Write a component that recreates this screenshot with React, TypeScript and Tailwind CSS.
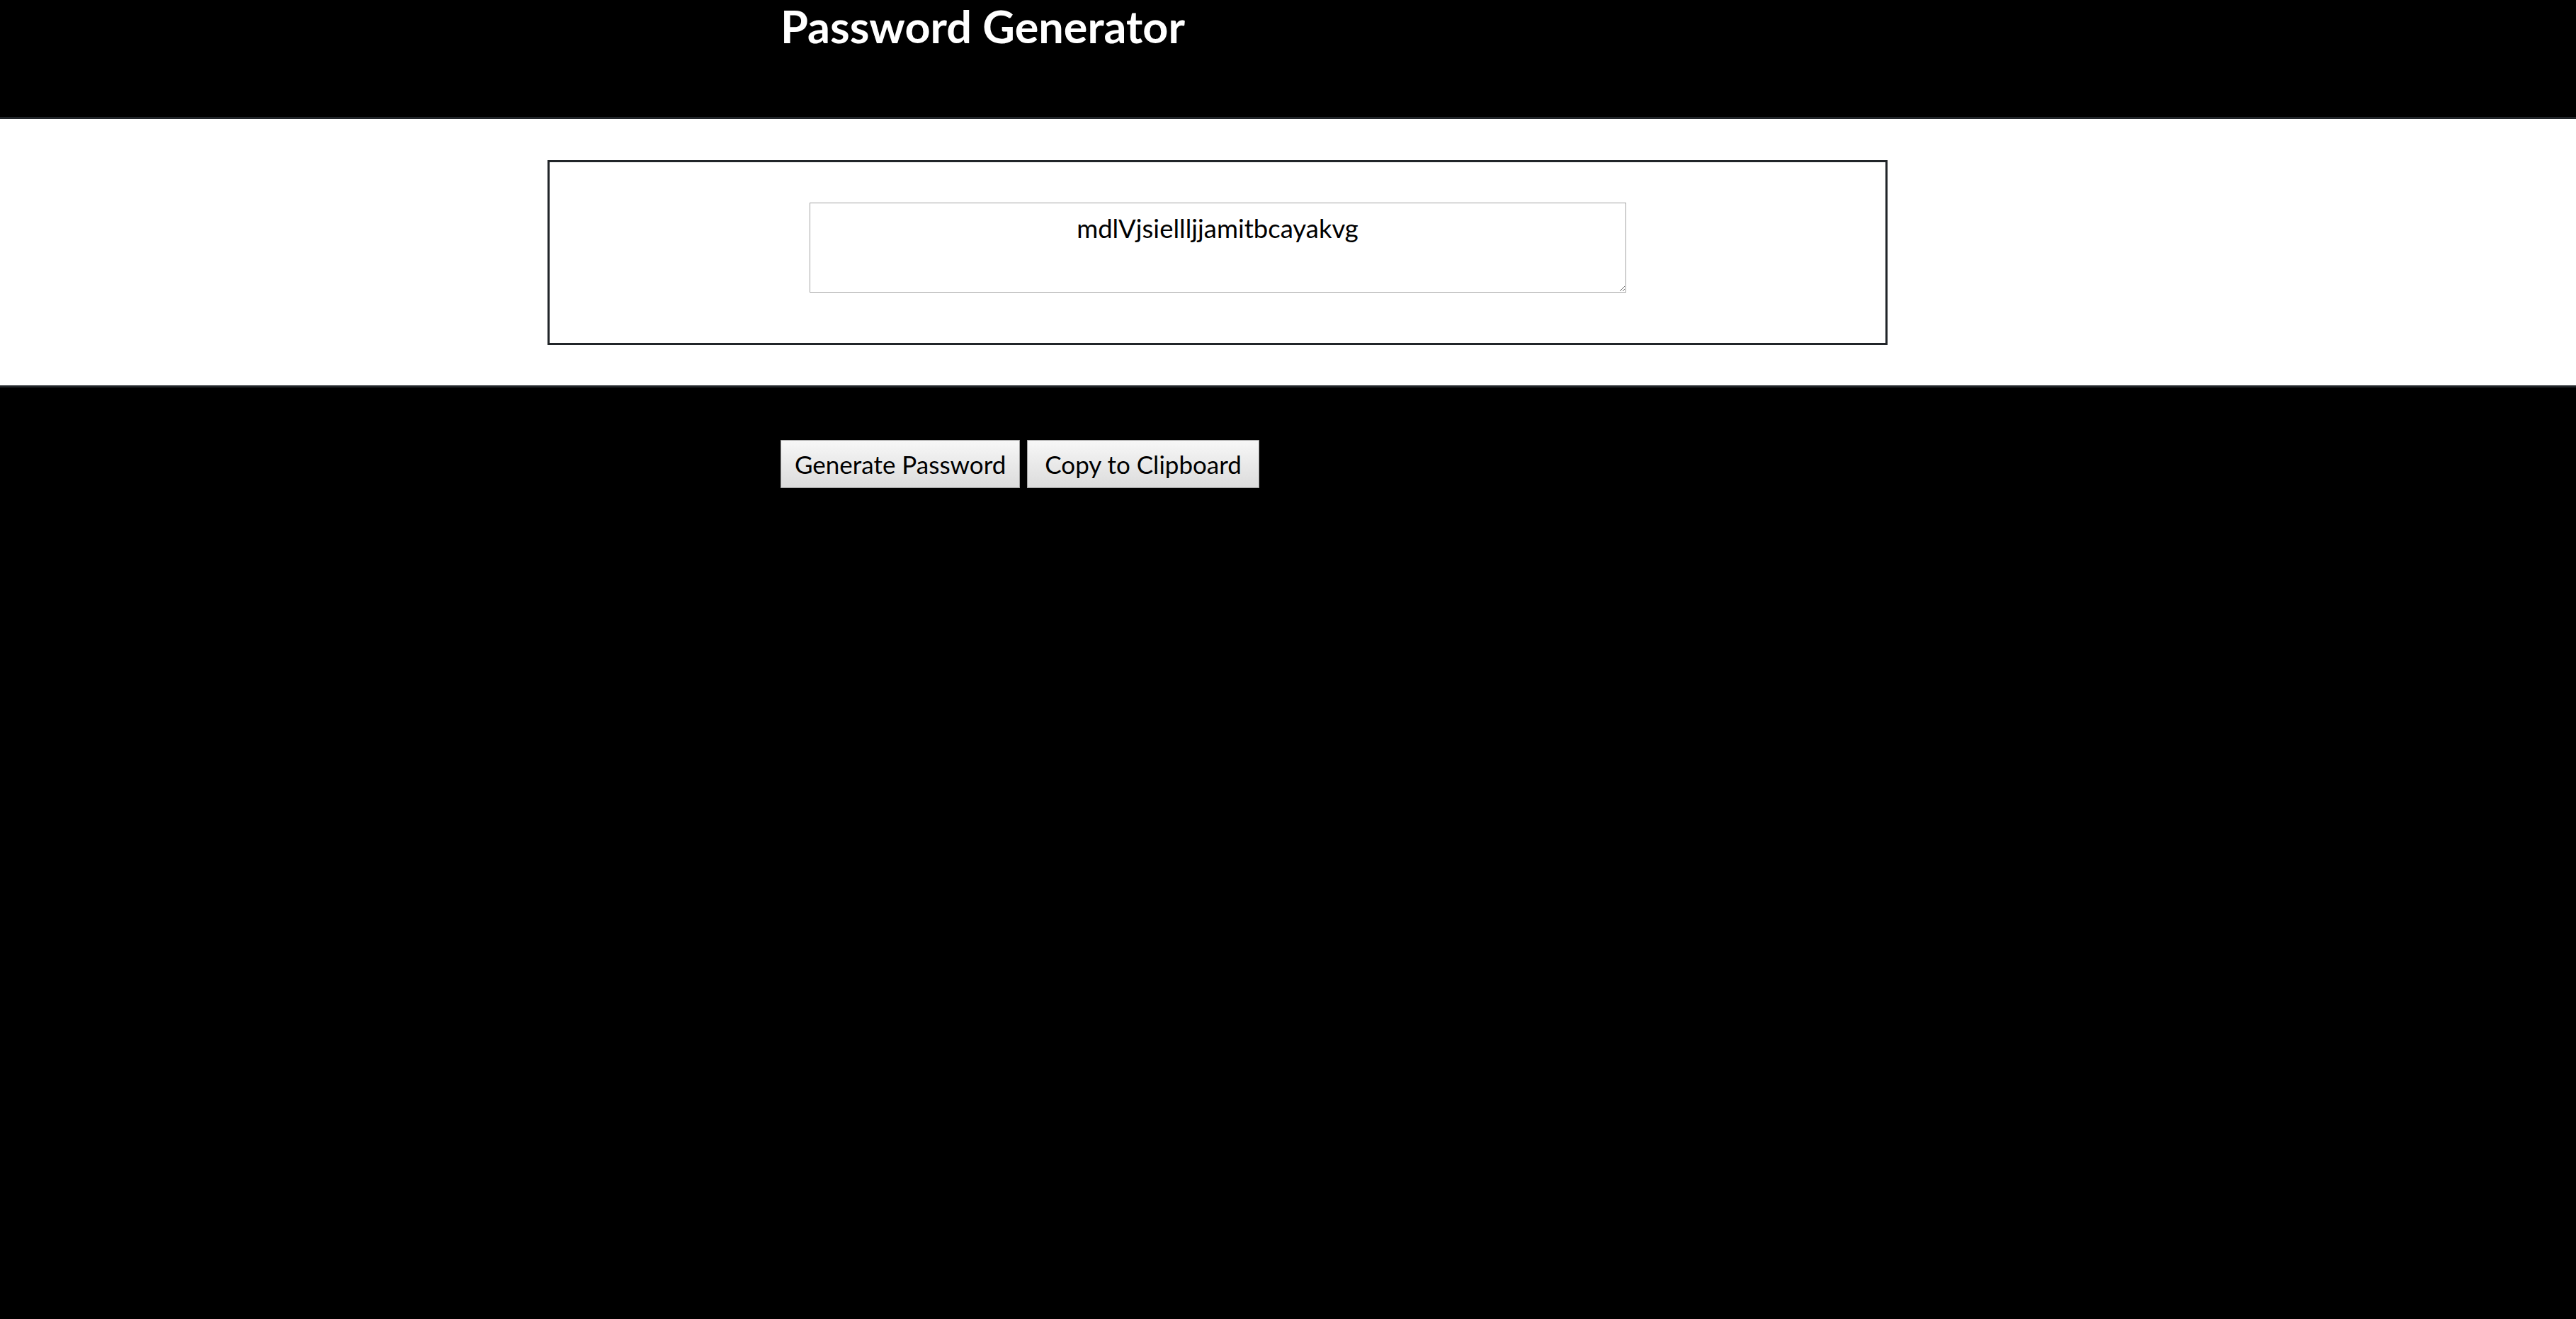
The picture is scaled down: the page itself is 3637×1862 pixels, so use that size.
import React, { useState } from 'react';

const CHARS = 'abcdefghijklmnopqrstuvwxyzABCDEFGHIJKLMNOPQRSTUVWXYZ';

function makePassword(len: number) {
  let out = '';
  for (let i = 0; i < len; i++) out += CHARS[Math.floor(Math.random() * CHARS.length)];
  return out;
}

export default function App() {
  const [password, setPassword] = useState('mdlVjsiellljjamitbcayakvg');

  const copy = () => {
    navigator.clipboard?.writeText(password).catch(() => {});
  };

  return (
    <main className="min-h-screen bg-black font-['Lato','Open_Sans',sans-serif] text-[36px]">
      {/* Header */}
      <header className="h-[168px] border-b-[3px] border-[#212529] bg-black">
        <h1 className="ml-[1102px] pt-[5px] text-[63px] font-bold leading-none text-white">Password Generator</h1>
      </header>

      {/* Output panel */}
      <section className="border-b-[3px] border-[#212529] bg-white pt-[58px] pb-[57px]">
        <div className="ml-[773px] w-[1892px] border-[3px] border-[#212529] pt-[57px] pb-[71px]">
          <textarea
            value={password}
            onChange={e => setPassword(e.target.value)}
            className="mx-auto block h-[127px] w-[1153px] border border-[#a3a3a3] bg-white px-[4px] pt-[8px] text-center text-[36.5px] text-black outline-none"
          />
        </div>
      </section>

      {/* Actions */}
      <div className="ml-[1102px] flex gap-[10px] pt-[74px]">
        <button
          onClick={() => setPassword(makePassword(25))}
          className="h-[68px] border border-[#a0a0a0] bg-linear-to-b from-[#f7f7f7] to-[#dcdcdc] px-[19px] text-[35px] leading-[1.2] text-black"
        >
          Generate Password
        </button>
        <button
          onClick={copy}
          className="h-[68px] border border-[#a0a0a0] bg-linear-to-b from-[#f7f7f7] to-[#dcdcdc] px-[24px] text-[35px] leading-[1.2] text-black"
        >
          Copy to Clipboard
        </button>
      </div>
    </main>
  );
}
